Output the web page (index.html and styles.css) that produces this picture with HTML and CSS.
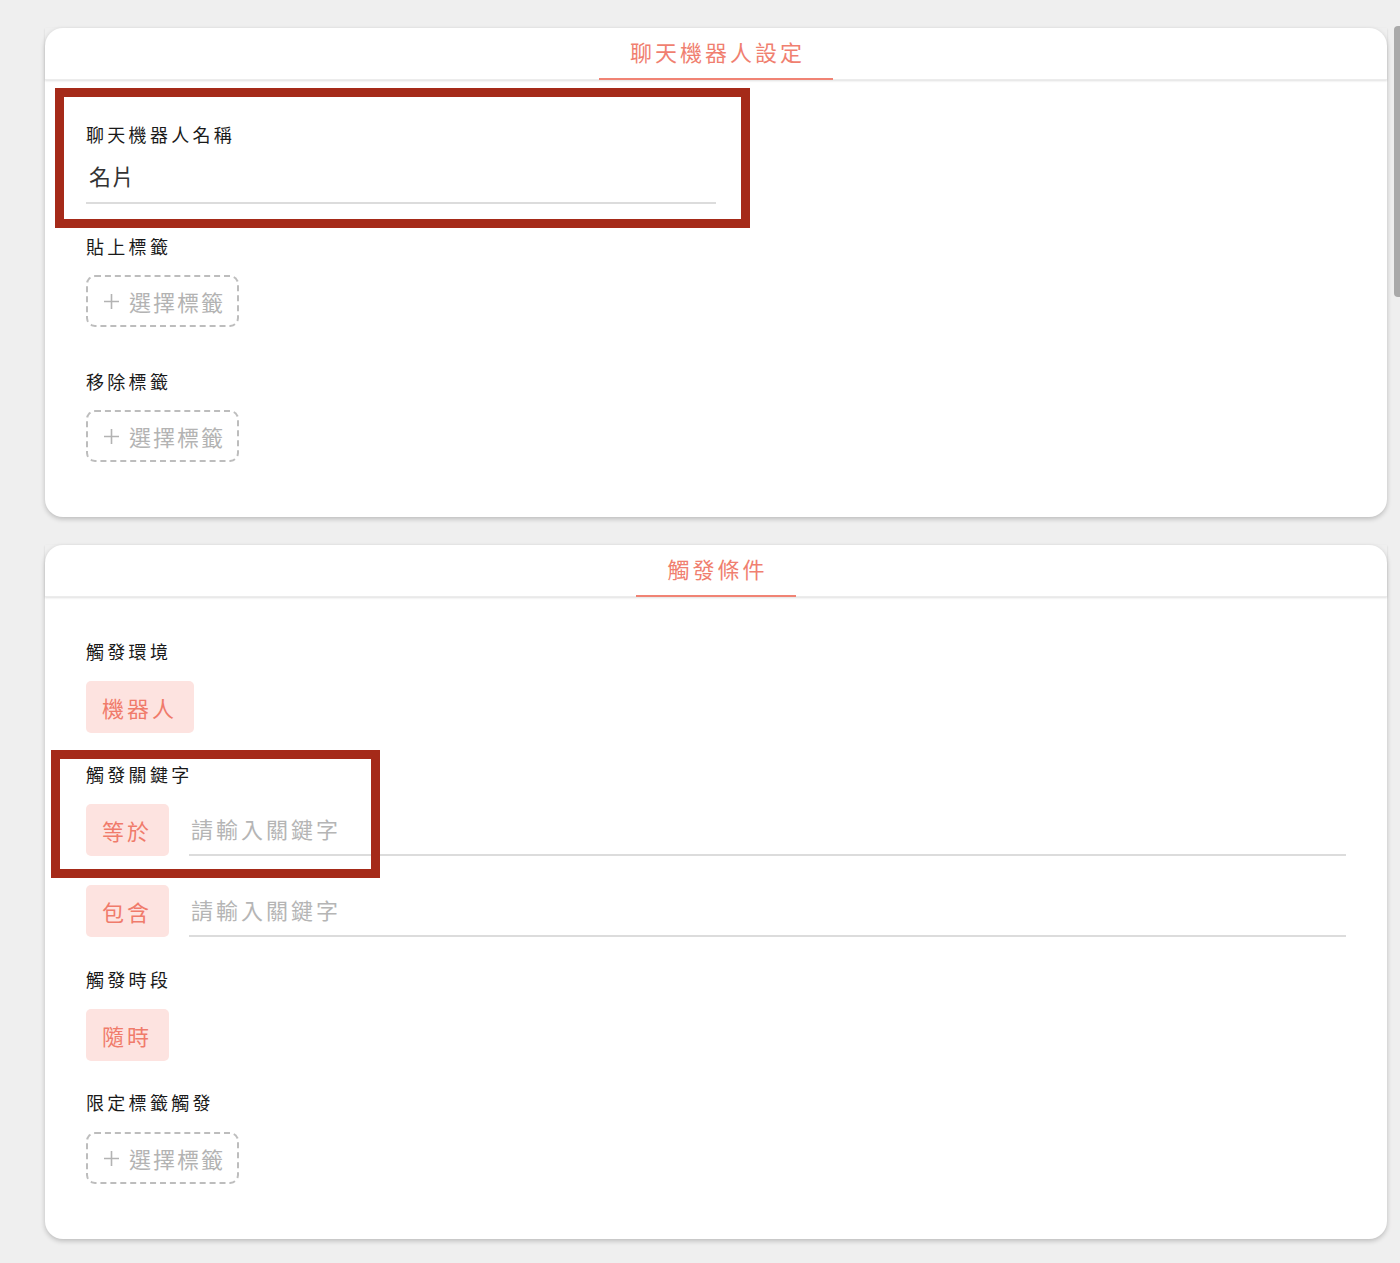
FILE: index.html
```html
<!DOCTYPE html>
<html lang="zh-Hant">
<head>
<meta charset="utf-8">
<title>聊天機器人設定</title>
<link rel="stylesheet" href="styles.css">
</head>
<body>
<div class="page">
  <section class="card">
    <header class="card-head"><div class="tab">聊天機器人設定</div></header>
    <div class="card-body">
      <div class="field field-name">
        <div class="label label-tight">聊天機器人名稱</div>
        <input class="line-input name-input" type="text" value="名片">
      </div>
      <div class="field">
        <div class="label label-tag">貼上標籤</div>
        <button class="tag-btn" type="button"><svg class="plus" viewBox="0 0 17 17" width="17" height="17"><path d="M8.5 1v15M1 8.5h15" stroke="#b3b3b3" stroke-width="1.6" fill="none"/></svg><span>選擇標籤</span></button>
      </div>
      <div class="field field-wide">
        <div class="label label-tag">移除標籤</div>
        <button class="tag-btn" type="button"><svg class="plus" viewBox="0 0 17 17" width="17" height="17"><path d="M8.5 1v15M1 8.5h15" stroke="#b3b3b3" stroke-width="1.6" fill="none"/></svg><span>選擇標籤</span></button>
      </div>
    </div>
    <div class="annot annot-1"></div>
  </section>

  <section class="card">
    <header class="card-head"><div class="tab">觸發條件</div></header>
    <div class="card-body">
      <div class="field">
        <div class="label">觸發環境</div>
        <span class="chip">機器人</span>
      </div>
      <div class="field">
        <div class="label">觸發關鍵字</div>
        <div class="kw-row">
          <span class="chip">等於</span>
          <input class="line-input kw-input" type="text" placeholder="請輸入關鍵字">
        </div>
        <div class="kw-row">
          <span class="chip">包含</span>
          <input class="line-input kw-input" type="text" placeholder="請輸入關鍵字">
        </div>
      </div>
      <div class="field field-after-kw">
        <div class="label">觸發時段</div>
        <span class="chip">隨時</span>
      </div>
      <div class="field">
        <div class="label">限定標籤觸發</div>
        <button class="tag-btn" type="button"><svg class="plus" viewBox="0 0 17 17" width="17" height="17"><path d="M8.5 1v15M1 8.5h15" stroke="#b3b3b3" stroke-width="1.6" fill="none"/></svg><span>選擇標籤</span></button>
      </div>
    </div>
    <div class="annot annot-2"></div>
  </section>
</div>
<div class="scrollbar"></div>
</body>
</html>
```

FILE: styles.css
```css
* { box-sizing: border-box; }
html, body {
  margin: 0;
  padding: 0;
  background: #efefef;
  font-family: "Noto Sans CJK TC", "Noto Sans", sans-serif;
  color: #1a1a1a;
}
.page {
  padding: 28px 13px 40px 45px;
  display: flex;
  flex-direction: column;
  gap: 28px;
}
.card {
  position: relative;
  background: #fff;
  border-radius: 18px;
  box-shadow: 0 2px 5px rgba(0, 0, 0, 0.22);
}
.card-head {
  height: 52px;
  display: flex;
  justify-content: center;
  box-shadow: 0 1px 2px rgba(0, 0, 0, 0.13);
  border-bottom: 1px solid #ececec;
  position: relative;
}
.tab {
  height: 52px;
  line-height: 46px;
  padding: 0 28px 4px 31px;
  font-size: 22px;
  letter-spacing: 3px;
  color: #f07f70;
  border-bottom: 2px solid #f08374;
  margin-bottom: -1px;
}
.card-body {
  padding: 41px 41px 55px 41px;
  display: flex;
  flex-direction: column;
  gap: 28px;
}
.field {
  display: flex;
  flex-direction: column;
  align-items: flex-start;
}
.field-name { margin-bottom: 1px; }
.field-wide { margin-top: 13px; }
.field-after-kw { margin-top: 1px; }
.label {
  font-size: 18px;
  line-height: 26px;
  letter-spacing: 3.3px;
  margin-bottom: 17px;
  color: #1a1a1a;
}
.label-tight { margin-bottom: 10px; }
.label-tag { margin-bottom: 16px; }
.line-input {
  font-family: "Noto Sans CJK TC", "Noto Sans", sans-serif;
  border: none;
  border-bottom: 2px solid #dcdcdc;
  outline: none;
  background: transparent;
  margin: 0;
  border-radius: 0;
}
.name-input {
  width: 50%;
  height: 47px;
  padding: 0 0 10px 3px;
  line-height: 37px;
  font-size: 22px;
  letter-spacing: 1px;
  color: #333;
}
.kw-row {
  display: flex;
  align-items: stretch;
  gap: 20px;
  width: 100%;
  height: 52px;
}
.kw-row + .kw-row { margin-top: 29px; }
.kw-input {
  flex: 1;
  height: 52px;
  padding: 0 0 2px 2px;
  font-size: 22px;
  letter-spacing: 3px;
  color: #333;
}
.kw-input::placeholder {
  color: #b5b5b5;
  letter-spacing: 3px;
}
.chip {
  display: inline-block;
  height: 52px;
  line-height: 52px;
  padding: 0 17px 0 16px;
  background: #fde3e0;
  color: #f07b6b;
  border-radius: 5px;
  font-size: 22px;
  letter-spacing: 3px;
  white-space: nowrap;
}
.tag-btn {
  display: inline-flex;
  align-items: center;
  height: 52px;
  padding: 0 12px 0 15px;
  border: 2px dashed #bdbdbd;
  border-radius: 9px;
  background: #fff;
  font-family: "Noto Sans CJK TC", "Noto Sans", sans-serif;
  font-size: 22px;
  letter-spacing: 2px;
  color: #b3b3b3;
  cursor: pointer;
}
.plus {
  display: block;
  margin-right: 9px;
}
.annot {
  position: absolute;
  border: 9px solid #a52a19;
  pointer-events: none;
}
.annot-1 {
  left: 10px;
  top: 60px;
  width: 695px;
  height: 140px;
}
.annot-2 {
  left: 6px;
  top: 205px;
  width: 329px;
  height: 128px;
}
.scrollbar {
  position: fixed;
  top: 26px;
  right: 0;
  width: 6px;
  height: 271px;
  background: #aaaaaa;
  border-radius: 4px 0 0 4px;
}
```
